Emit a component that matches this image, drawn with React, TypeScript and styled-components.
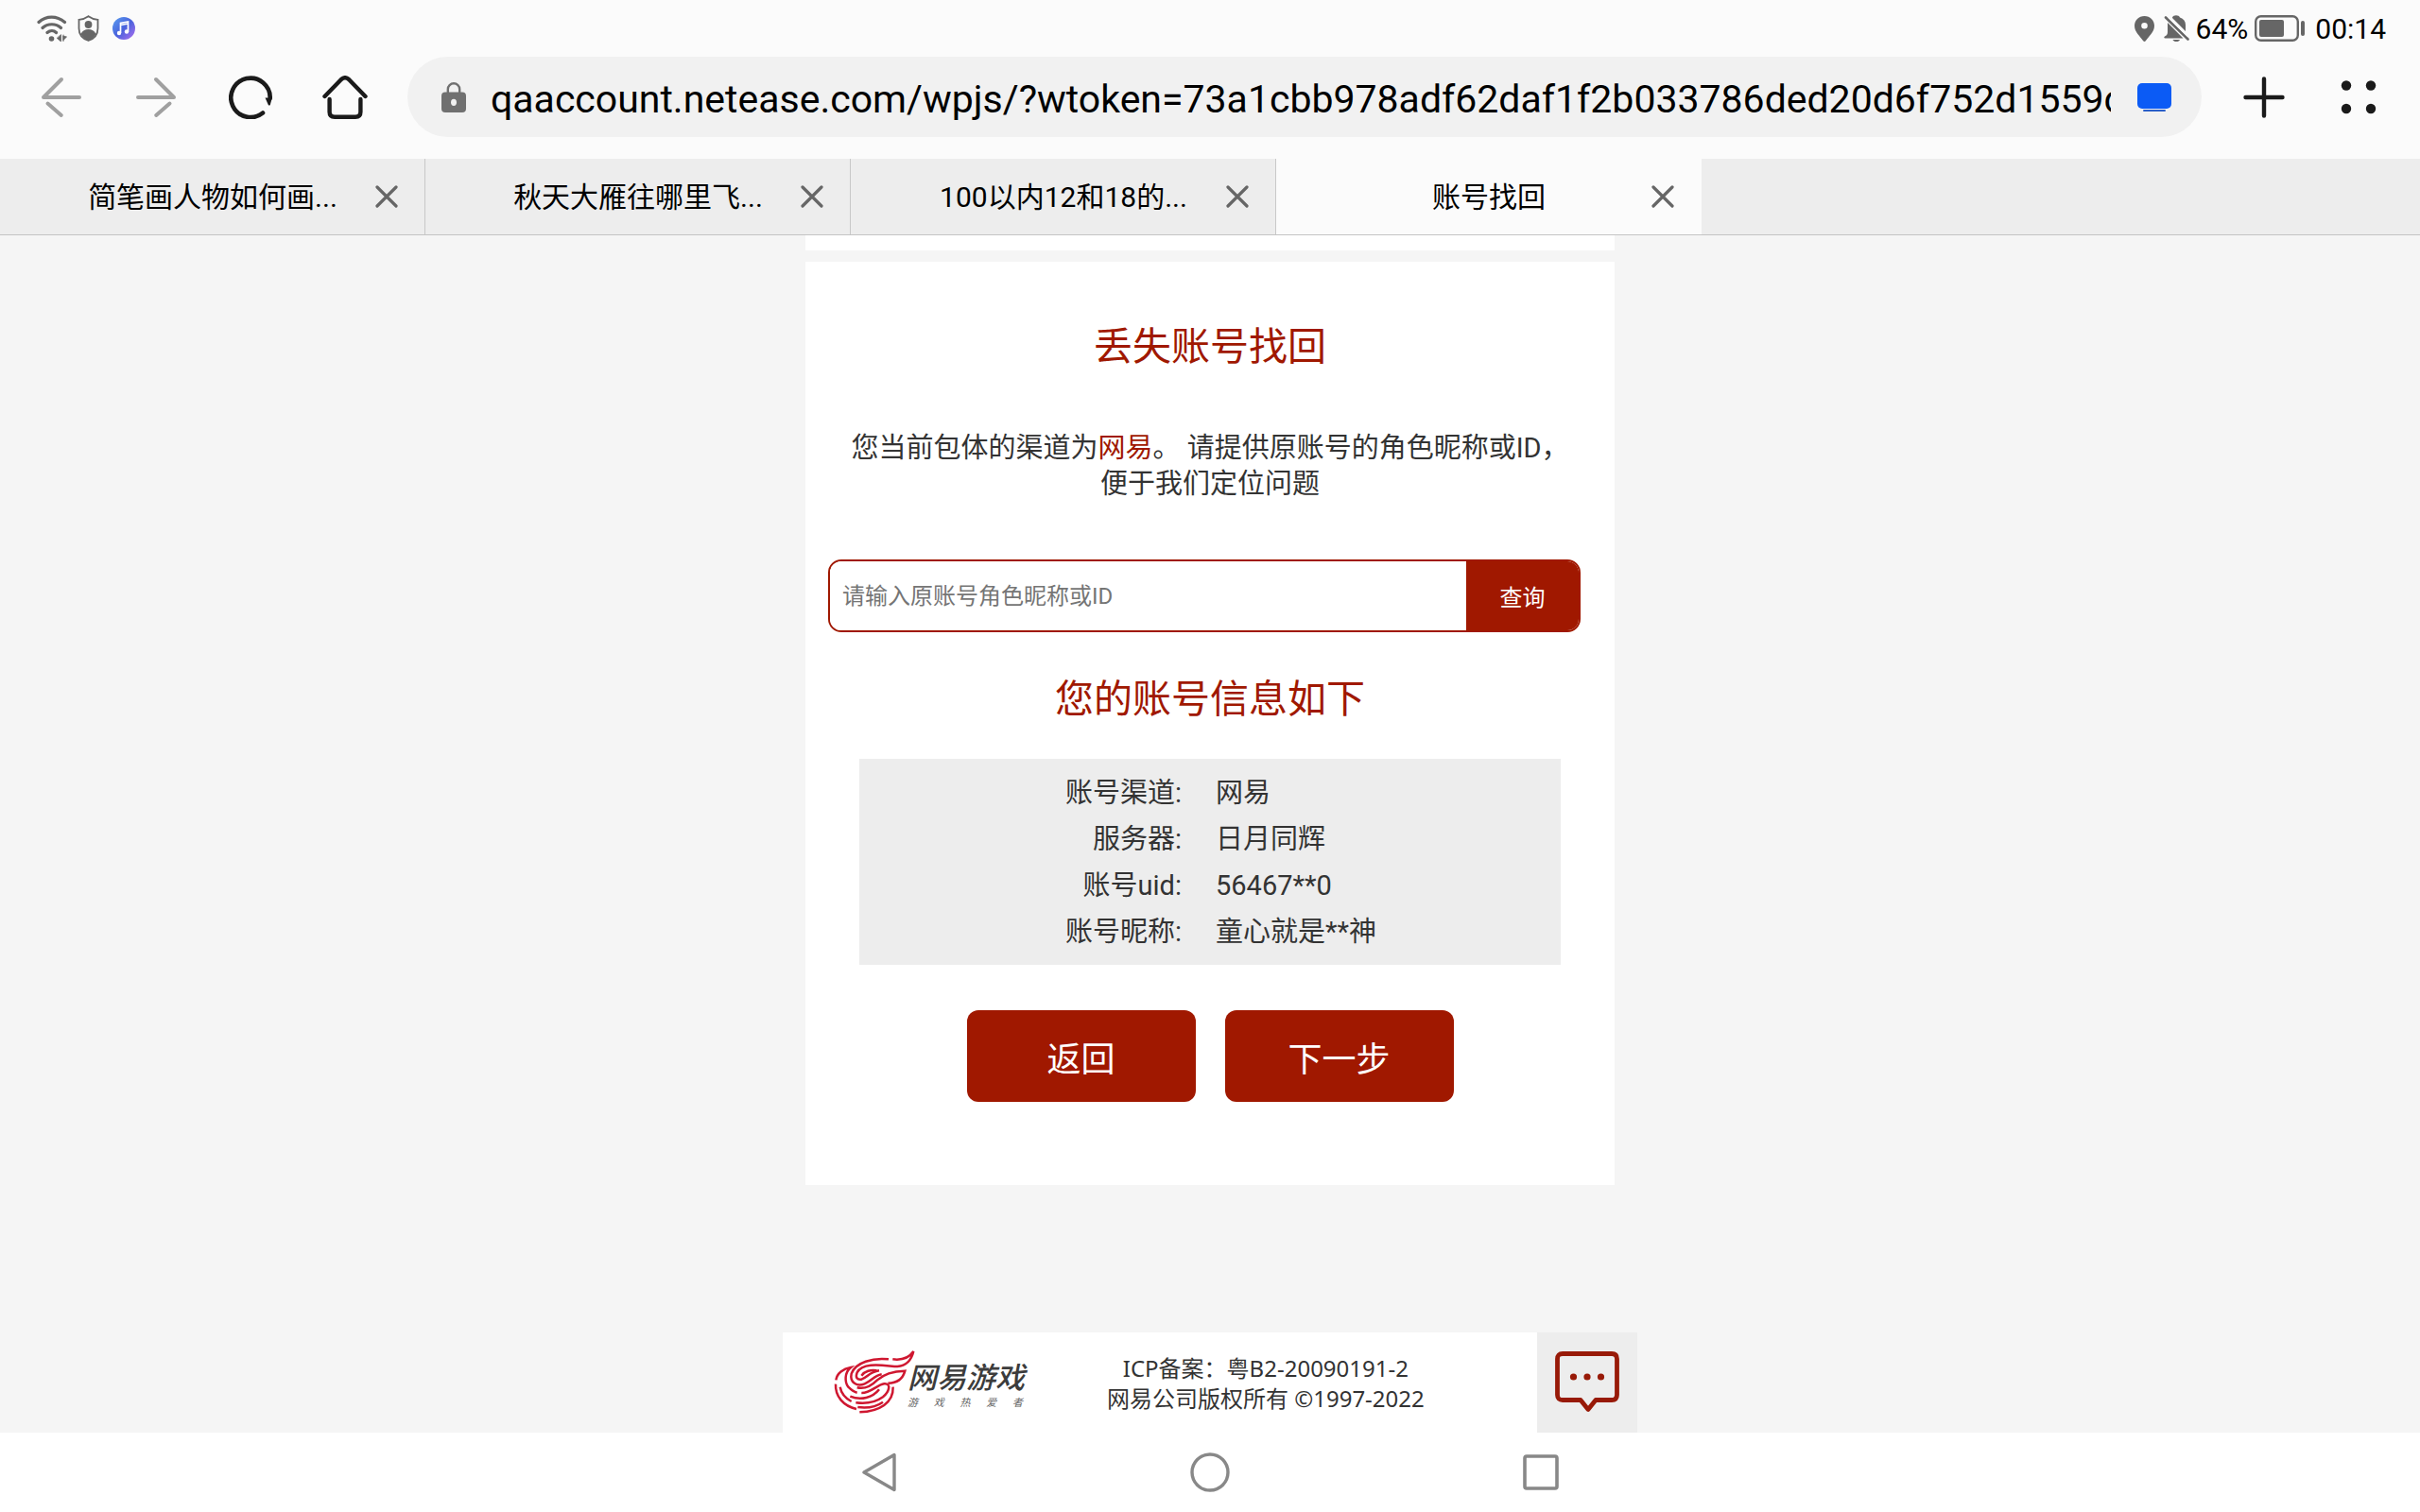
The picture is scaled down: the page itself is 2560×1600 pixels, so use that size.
import React from 'react';
import styled, { createGlobalStyle } from 'styled-components';

const brand = '#a01800';

const GlobalStyle = createGlobalStyle`
  *, *::before, *::after { box-sizing: border-box; }
  body {
    margin: 0;
    background: #f5f5f5;
    color: #333;
    font-family: Roboto, "Noto Sans CJK SC", sans-serif;
  }
  button, input { font: inherit; color: inherit; }
  button { border: 0; padding: 0; background: none; cursor: pointer; }
  h1, h2, p { margin: 0; font-weight: 400; }
  svg { display: block; flex: none; }
`;

const Screen = styled.div`
  display: flex;
  flex-direction: column;
  min-height: 100vh;
`;

const Chrome = styled.header`
  background: #fbfbfb;
  color: #000;
`;

const StatusBar = styled.div`
  display: flex;
  justify-content: space-between;
  align-items: center;
  height: 60px;
  padding: 0 36px 0 39px;
  font-size: 30px;
  line-height: 32px;
`;

const StatusGroup = styled.div<{ $gap: number }>`
  display: flex;
  align-items: center;
  gap: ${(p) => p.$gap}px;
`;

const StatusText = styled.span<{ $spaced?: boolean }>`
  padding-top: 2px;
  margin-left: ${(p) => (p.$spaced ? 3 : 0)}px;
`;

const Toolbar = styled.nav`
  display: flex;
  align-items: center;
  gap: 16px;
  padding: 0 15px 23px;
`;

const ToolGroup = styled.div`
  display: flex;
`;

const ToolButton = styled.button<{ $muted?: boolean }>`
  display: grid;
  place-items: center;
  width: 100px;
  height: 85px;
  color: ${(p) => (p.$muted ? '#a0a0a0' : '#1a1a1a')};
`;

const AddressBar = styled.label`
  display: flex;
  align-items: center;
  flex: 1;
  min-width: 0;
  height: 85px;
  padding: 0 32px 0 36px;
  border-radius: 43px;
  background: #f1f1f1;
`;

const AddressInput = styled.input`
  flex: 1;
  min-width: 0;
  margin: 0 28px 0 26px;
  padding: 4px 0 0;
  border: 0;
  outline: 0;
  background: none;
  font-size: 41px;
  line-height: 48px;
`;

const TabStrip = styled.div`
  display: flex;
  height: 81px;
  background: #ededed;
  border-bottom: 1px solid #c4c4c4;
`;

const Tab = styled.div<{ $active?: boolean }>`
  display: flex;
  align-items: center;
  gap: 16px;
  flex: 0 1 450px;
  min-width: 0;
  padding: 0 14px 0 83px;
  border-right: 1px solid ${(p) => (p.$active ? '#fbfbfb' : '#c8c8c8')};
  background: ${(p) => (p.$active ? '#fbfbfb' : 'transparent')};
`;

const TabTitle = styled.button`
  flex: 1;
  min-width: 0;
  padding-top: 2px;
  overflow: hidden;
  white-space: nowrap;
  text-align: center;
  font-size: 30px;
  line-height: 44px;
`;

const TabClose = styled.button`
  display: grid;
  place-items: center;
  width: 52px;
  height: 52px;
  color: #666;
`;

const Page = styled.main`
  display: flex;
  flex-direction: column;
  align-items: center;
  flex: 1;
`;

const PreviousPanel = styled.div`
  width: 100%;
  max-width: 856px;
  height: 16px;
  background: #fff;
`;

const Card = styled.section`
  width: 100%;
  max-width: 856px;
  margin: 12px 0 60px;
  padding: 60px 0 88px;
  background: #fff;
`;

const Heading = styled.h1`
  color: ${brand};
  font-size: 41px;
  line-height: 60px;
  text-align: center;
`;

const Intro = styled.p`
  margin: 58px 44px 61px;
  font-size: 29px;
  line-height: 38px;
  text-align: center;
`;

const Channel = styled.span`
  color: ${brand};
`;

const SearchForm = styled.form`
  display: flex;
  height: 77px;
  margin: 0 36px 41px 24px;
  border: 2px solid ${brand};
  border-radius: 14px;
  overflow: hidden;
`;

const SearchInput = styled.input`
  flex: 1;
  min-width: 0;
  padding: 0 13px;
  border: 0;
  outline: 0;
  background: #fff;
  font-size: 24px;
  &::placeholder { color: #757575; opacity: 1; }
`;

const SearchButton = styled.button`
  width: 119px;
  background: ${brand};
  color: #fff;
  font-size: 24px;
`;

const InfoBox = styled.div`
  margin: 33px 57px 48px;
  padding: 12px 0 10px;
  background: #ededed;
`;

const InfoTable = styled.table`
  width: 100%;
  border-collapse: collapse;
  table-layout: fixed;
  font-size: 29px;
  line-height: 49px;
`;

const InfoLabel = styled.th`
  width: 50%;
  padding: 0 30px 0 0;
  font-weight: 400;
  text-align: right;
`;

const InfoValue = styled.td`
  padding: 0 0 0 6px;
`;

const Actions = styled.div`
  display: flex;
  justify-content: center;
  gap: 31px;
`;

const ActionButton = styled.button`
  width: 242px;
  height: 97px;
  border-radius: 12px;
  background: ${brand};
  color: #fff;
  font-size: 36px;
`;

const Footer = styled.footer`
  display: flex;
  width: 100%;
  max-width: 904px;
  height: 106px;
  margin-top: auto;
`;

const FooterBar = styled.div`
  display: flex;
  align-items: center;
  flex: 1;
  gap: 81px;
  padding-left: 46px;
  background: #fff;
`;

const LogoLink = styled.a`
  display: flex;
  align-items: center;
  color: #3c3c3c;
  text-decoration: none;
`;

const WordMark = styled.span`
  display: flex;
  flex-direction: column;
  width: 130px;
  margin-left: -24px;
  padding-top: 8px;
  font-style: italic;
`;

const WordName = styled.span`
  font-size: 31px;
  line-height: 36px;
  font-weight: 500;
`;

const WordTagline = styled.span`
  display: flex;
  justify-content: space-between;
  width: 122px;
  font-size: 11px;
  line-height: 16px;
  color: #666;
`;

const Legal = styled.p`
  padding-top: 2px;
  font-family: "Noto Sans", "Noto Sans CJK SC", sans-serif;
  font-size: 24px;
  line-height: 32px;
  text-align: center;
  white-space: nowrap;
`;

const ChatButton = styled.button`
  display: grid;
  place-items: center;
  width: 106px;
  background: #ededed;
`;

const SystemNav = styled.nav`
  display: flex;
  justify-content: center;
  height: 84px;
  background: #fff;
`;

const SystemButton = styled.button`
  display: grid;
  place-items: center;
  width: 350px;
  height: 84px;
  color: #888;
`;

const WifiIcon = () => (
  <svg width="32" height="28" viewBox="0 0 32 28" fill="none" stroke="#666" strokeWidth="3.2" strokeLinecap="round">
    <path d="M2 7.5C10 .2 21 .2 29.500 7.500M6 13.500C11.500 8.500 20 8.500 25.500 13.500M11 18.500C14 16 18 16 20.500 18.500" />
    <circle cx="15.500" cy="25" r="2.800" fill="#666" stroke="none" />
    <path d="M25.500 21v7l-4-3.500zM28 21v7M28 22l3.500 1-3.500 3.500z" fill="#666" stroke="#666" strokeWidth=".8" />
  </svg>
);

const ShieldIcon = () => (
  <svg width="23" height="28" viewBox="0 0 23 28">
    <path d="M11.500 1.200C8.500 3.400 5 4.500 1.500 4.800V14c0 6.500 4 11 10 13 6-2 10-6.500 10-13V4.800C18 4.500 14.500 3.400 11.500 1.200z" fill="none" stroke="#666" strokeWidth="1.800" />
    <circle cx="11.500" cy="10" r="3.900" fill="#666" />
    <path d="M3.500 20c1.500-3.500 4.500-5 8-5s6.500 1.500 8 5c-1.800 3.500-4.500 5.700-8 7-3.500-1.300-6.200-3.500-8-7z" fill="#666" />
  </svg>
);

const MusicIcon = () => (
  <svg width="27" height="24" viewBox="-3 0 27 24">
    <defs>
      <linearGradient id="music" x1="0" y1="0" x2="1" y2="1">
        <stop offset="0" stopColor="#5aa0f0" />
        <stop offset=".5" stopColor="#4a62dc" />
        <stop offset="1" stopColor="#b070f0" />
      </linearGradient>
    </defs>
    <circle cx="12" cy="12" r="12" fill="url(#music)" />
    <path d="M8.500 17V6.500l8-1.500v10.500M8.500 8.500l8-1.500" fill="none" stroke="#fff" strokeWidth="1.700" />
    <circle cx="7" cy="17" r="2.200" fill="#fff" />
    <circle cx="15" cy="15.500" r="2.200" fill="#fff" />
  </svg>
);

const PinIcon = () => (
  <svg width="21" height="27" viewBox="0 0 21 27">
    <path fillRule="evenodd" d="M10.500 0C4.500 0 0 4.500 0 10.300 0 17 6 21.500 9.200 26.300q1.300 1.400 2.600 0C15 21.500 21 17 21 10.300 21 4.500 16.500 0 10.500 0zm0 7a3.300 3.300 0 1 1 0 6.600 3.300 3.300 0 0 1 0-6.600z" fill="#666" />
  </svg>
);

const BellOffIcon = () => (
  <svg width="30" height="28" viewBox="-3 0 30 28" fill="#666">
    <path d="M9 2.500C10-.5 16-.5 17 2.500c4 1.300 6 4 6 8v6.500L9 3z" />
    <path d="M4 8L20.500 24.500H1.500c-1.500 0-1.500-1.500-.5-2 2-1 3-2.500 3-4.500z" />
    <path d="M9.500 26h7.500c-1 2.800-6.500 2.800-7.500 0z" />
    <path d="M2 2.500L25.500 25.500" stroke="#666" strokeWidth="2.600" strokeLinecap="round" />
    <path d="M5 2.500L25.500 22.500" stroke="#fbfbfb" strokeWidth="1.200" />
  </svg>
);

const BatteryIcon = () => (
  <svg width="54" height="28" viewBox="0 0 54 28">
    <rect x="1.200" y="1.200" width="44.600" height="25.600" rx="5.500" fill="none" stroke="#666" strokeWidth="2.400" />
    <rect x="5" y="5" width="26" height="18" rx="2" fill="#666" />
    <rect x="49" y="6" width="4" height="16" rx="2" fill="#666" />
  </svg>
);

const BackIcon = () => (
  <svg width="44" height="44" viewBox="0 0 44 44" fill="none" stroke="currentColor" strokeWidth="4" strokeLinecap="round">
    <path d="M41 22H3L22 3" strokeLinejoin="round" />
    <path d="M7.500 28.500L21.800 41" />
  </svg>
);

const ForwardIcon = () => (
  <svg width="44" height="44" viewBox="0 0 44 44" fill="none" stroke="currentColor" strokeWidth="4" strokeLinecap="round">
    <path d="M3 22H41L22 3" strokeLinejoin="round" />
    <path d="M36.500 28.500L22.200 41" />
  </svg>
);

const ReloadIcon = () => (
  <svg width="46" height="46" viewBox="0 0 46 46">
    <path d="M36 39.500A20.700 20.700 0 1 1 43.700 24" fill="none" stroke="currentColor" strokeWidth="4.600" strokeLinecap="round" />
    <path d="M38.500 23.500h7.300l-2 7.500q-1 1.200-2 0z" fill="currentColor" />
  </svg>
);

const HomeIcon = () => (
  <svg width="48" height="46" viewBox="0 0 48 46" fill="none" stroke="currentColor" strokeWidth="4.400" strokeLinecap="round" strokeLinejoin="round">
    <path d="M2.500 22L20 4Q24 .5 28 4L45.500 22" />
    <path d="M7.600 25V38.500Q7.600 43.700 13 43.700H35Q40.400 43.700 40.400 38.500V25" />
  </svg>
);

const LockIcon = () => (
  <svg width="26" height="34" viewBox="0 0 26 34">
    <path d="M6.800 14V8.500a6.200 6.200 0 0 1 12.400 0V14" fill="none" stroke="#707070" strokeWidth="2.400" />
    <rect y="11.500" width="26" height="21.500" rx="4" fill="#707070" />
    <ellipse cx="13" cy="22.300" rx="3" ry="3.600" fill="#f1f1f1" />
  </svg>
);

const ScreenIcon = () => (
  <svg width="36" height="30" viewBox="0 0 36 30">
    <rect width="36" height="27" rx="5" fill="#0b5bf5" />
    <rect x="6" y="28" width="24" height="2" rx="1" fill="#2a5fc8" />
  </svg>
);

const PlusIcon = () => (
  <svg width="44" height="44" viewBox="0 0 44 44" stroke="currentColor" strokeWidth="4.400" strokeLinecap="round">
    <path d="M22 2.500V41.500M2.500 22H41.500" />
  </svg>
);

const DotsIcon = () => (
  <svg width="38" height="36" viewBox="0 0 38 36" fill="currentColor">
    <circle cx="6" cy="5.500" r="5.200" />
    <circle cx="32" cy="5.500" r="5.200" />
    <circle cx="6" cy="30" r="5.200" />
    <circle cx="32" cy="30" r="5.200" />
  </svg>
);

const CloseIcon = () => (
  <svg width="24" height="24" viewBox="0 0 24 24" fill="none" stroke="currentColor" strokeWidth="3.200" strokeLinecap="round">
    <path d="M2 2L22 22M22 2L2 22" />
  </svg>
);

const FlameLogo = () => (
  <svg width="110" height="80" viewBox="0 0 330 240" fill="none" stroke="#cf1730" strokeWidth="7.500">
    <path d="M198 46C150 40 92 56 80 92C74 120 98 134 122 124C146 114 152 98 176 94" />
    <path d="M211 46C242 50 264 40 277 21C270 50 254 67 226 69C190 68 118 52 98 88C92 104 98 112 112 110C130 104 138 86 168 82" />
    <path d="M112 98C122 84 142 78 160 82" />
    <path d="M196 122C226 122 244 106 250 83C216 84 184 92 162 112C146 128 122 142 98 136" />
    <path d="M31 112C34 90 54 76 78 72C58 88 58 118 70 134C80 144 90 150 98 152" />
    <path d="M30 125C28 165 55 194 96 204" />
    <path d="M44 134C48 156 58 168 80 180" />
    <path d="M112 153C140 154 160 128 184 124C208 122 200 150 180 166C158 182 124 188 94 184" />
    <path d="M76 164C110 178 148 168 168 142" />
    <path d="M212 134C214 184 170 212 106 214" />
    <path d="M100 198C130 202 160 196 180 182" />
  </svg>
);

const ChatIcon = () => (
  <svg width="68" height="66" viewBox="0 0 68 66">
    <path d="M8 2.500H60Q65.500 2.500 65.500 8V46Q65.500 51.500 60 51.500H43L35 61.500L27 51.500H8Q2.500 51.500 2.500 46V8Q2.500 2.500 8 2.500z" fill="none" stroke="#981a08" strokeWidth="4.800" strokeLinejoin="round" />
    <circle cx="19.500" cy="27" r="3.600" fill="#981a08" />
    <circle cx="34" cy="27" r="3.600" fill="#981a08" />
    <circle cx="48.500" cy="27" r="3.600" fill="#981a08" />
  </svg>
);

const TriangleIcon = () => (
  <svg width="36" height="42" viewBox="0 0 36 42" fill="none" stroke="currentColor" strokeWidth="3.400" strokeLinejoin="round">
    <path d="M34 2.500V39.500L2 21z" />
  </svg>
);

const CircleIcon = () => (
  <svg width="42" height="42" viewBox="0 0 42 42" fill="none" stroke="currentColor" strokeWidth="3.400">
    <circle cx="21" cy="21" r="19" />
  </svg>
);

const SquareIcon = () => (
  <svg width="38" height="38" viewBox="0 0 38 38" fill="none" stroke="currentColor" strokeWidth="3.600">
    <rect x="2" y="2" width="34" height="34" rx="2" />
  </svg>
);

const tabs = [
  { title: '简笔画人物如何画...' },
  { title: '秋天大雁往哪里飞...' },
  { title: '100以内12和18的...' },
  { title: '账号找回', active: true },
];

const account = [
  ['账号渠道:', '网易'],
  ['服务器:', '日月同辉'],
  ['账号uid:', '56467**0'],
  ['账号昵称:', '童心就是**神'],
];

export default function App() {
  return (
    <Screen>
      <GlobalStyle />
      <Chrome>
        <StatusBar>
          <StatusGroup $gap={11}>
            <WifiIcon />
            <ShieldIcon />
            <MusicIcon />
          </StatusGroup>
          <StatusGroup $gap={7}>
            <PinIcon />
            <BellOffIcon />
            <StatusText>64%</StatusText>
            <BatteryIcon />
            <StatusText $spaced>00:14</StatusText>
          </StatusGroup>
        </StatusBar>
        <Toolbar>
          <ToolGroup>
            <ToolButton $muted aria-label="后退"><BackIcon /></ToolButton>
            <ToolButton $muted aria-label="前进"><ForwardIcon /></ToolButton>
            <ToolButton aria-label="刷新"><ReloadIcon /></ToolButton>
            <ToolButton aria-label="主页"><HomeIcon /></ToolButton>
          </ToolGroup>
          <AddressBar>
            <LockIcon />
            <AddressInput
              aria-label="网址"
              type="text"
              defaultValue="qaaccount.netease.com/wpjs/?wtoken=73a1cbb978adf62daf1f2b033786ded20d6f752d1559c"
            />
            <ScreenIcon />
          </AddressBar>
          <ToolGroup>
            <ToolButton aria-label="新建标签页"><PlusIcon /></ToolButton>
            <ToolButton aria-label="菜单"><DotsIcon /></ToolButton>
          </ToolGroup>
        </Toolbar>
        <TabStrip>
          {tabs.map((tab) => (
            <Tab key={tab.title} $active={tab.active}>
              <TabTitle>{tab.title}</TabTitle>
              <TabClose aria-label="关闭标签页"><CloseIcon /></TabClose>
            </Tab>
          ))}
        </TabStrip>
      </Chrome>

      <Page>
        <PreviousPanel />
        <Card>
          <Heading>丢失账号找回</Heading>
          <Intro>
            您当前包体的渠道为<Channel>网易</Channel>。 请提供原账号的角色昵称或ID，便于我们定位问题
          </Intro>
          <SearchForm onSubmit={(e) => e.preventDefault()}>
            <SearchInput type="text" aria-label="原账号角色昵称或ID" placeholder="请输入原账号角色昵称或ID" />
            <SearchButton type="submit">查询</SearchButton>
          </SearchForm>
          <Heading as="h2">您的账号信息如下</Heading>
          <InfoBox>
            <InfoTable>
              <tbody>
                {account.map(([label, value]) => (
                  <tr key={label}>
                    <InfoLabel scope="row">{label}</InfoLabel>
                    <InfoValue>{value}</InfoValue>
                  </tr>
                ))}
              </tbody>
            </InfoTable>
          </InfoBox>
          <Actions>
            <ActionButton type="button">返回</ActionButton>
            <ActionButton type="button">下一步</ActionButton>
          </Actions>
        </Card>
        <Footer>
          <FooterBar>
            <LogoLink href="#">
              <FlameLogo />
              <WordMark>
                <WordName>网易游戏</WordName>
                <WordTagline>
                  <span>游</span><span>戏</span><span>热</span><span>爱</span><span>者</span>
                </WordTagline>
              </WordMark>
            </LogoLink>
            <Legal>
              ICP备案：粤B2-20090191-2
              <br />
              网易公司版权所有 ©1997-2022
            </Legal>
          </FooterBar>
          <ChatButton type="button" aria-label="在线客服"><ChatIcon /></ChatButton>
        </Footer>
      </Page>

      <SystemNav>
        <SystemButton aria-label="返回上一级"><TriangleIcon /></SystemButton>
        <SystemButton aria-label="主屏幕"><CircleIcon /></SystemButton>
        <SystemButton aria-label="最近任务"><SquareIcon /></SystemButton>
      </SystemNav>
    </Screen>
  );
}
